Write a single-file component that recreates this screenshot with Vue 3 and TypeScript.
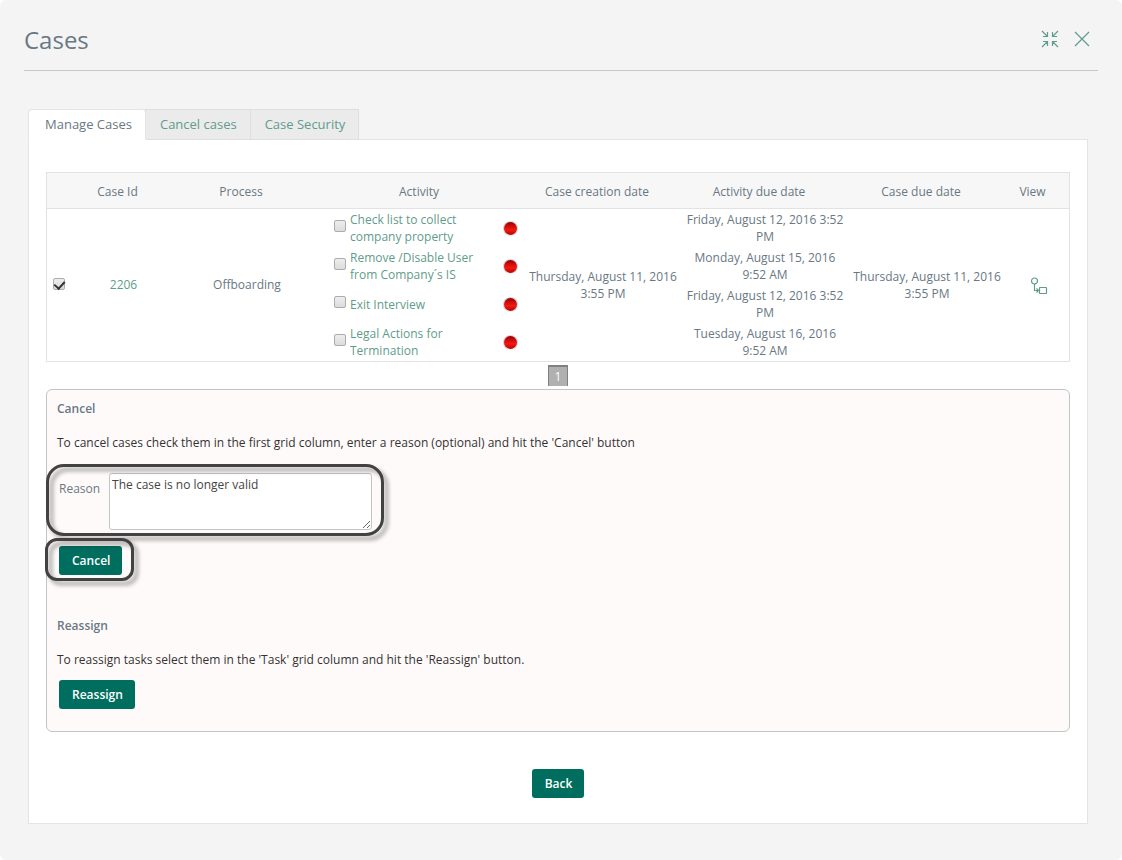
<script setup lang="ts">
import { ref } from 'vue'

interface Activity {
  name: string
  due: string
  selected: boolean
}

const tabs = ['Manage Cases', 'Cancel cases', 'Case Security']
const activeTab = ref(0)
const caseSelected = ref(true)
const reason = ref('The case is no longer valid')
const created = 'Thursday, August 11, 2016 3:55 PM'

const activities = ref<Activity[]>([
  { name: 'Check list to collect company property', due: 'Friday, August 12, 2016 3:52 PM', selected: false },
  { name: 'Remove /Disable User from Company´s IS', due: 'Monday, August 15, 2016 9:52 AM', selected: false },
  { name: 'Exit Interview', due: 'Friday, August 12, 2016 3:52 PM', selected: false },
  { name: 'Legal Actions for Termination', due: 'Tuesday, August 16, 2016 9:52 AM', selected: false },
])
</script>

<template>
  <div class="window">
    <header class="titlebar">
      <h1>Cases</h1>
      <div class="window-actions">
        <button type="button" class="icon-button" aria-label="Restore">
          <svg width="18" height="18" viewBox="0 0 18 18" fill="none" stroke="currentColor" stroke-width="1.2">
            <path d="M1 1l5.500 5.500M6.500 2v4.500H2M17 1l-5.500 5.500M11.500 2v4.500H16M1 17l5.500-5.500M6.500 16v-4.500H2M17 17l-5.500-5.500M11.500 16v-4.500H16" />
          </svg>
        </button>
        <button type="button" class="icon-button" aria-label="Close">
          <svg width="16" height="16" viewBox="0 0 16 16" fill="none" stroke="currentColor" stroke-width="1.2">
            <path d="M1 1l14 14M15 1L1 15" />
          </svg>
        </button>
      </div>
    </header>

    <main class="content">
      <div class="tabs" role="tablist">
        <button
          v-for="(tab, i) in tabs"
          :key="tab"
          type="button"
          role="tab"
          class="tab"
          :class="{ active: i === activeTab }"
          :aria-selected="i === activeTab"
          @click="activeTab = i"
        >{{ tab }}</button>
      </div>

      <section class="panel">
        <table class="cases">
          <colgroup>
            <col class="c-check" /><col class="c-id" /><col class="c-wide" /><col class="c-activity" />
            <col class="c-wide" /><col class="c-wide" /><col class="c-wide" /><col class="c-view" />
          </colgroup>
          <thead>
            <tr>
              <th></th>
              <th>Case Id</th>
              <th>Process</th>
              <th>Activity</th>
              <th>Case creation date</th>
              <th>Activity due date</th>
              <th>Case due date</th>
              <th>View</th>
            </tr>
          </thead>
          <tbody>
            <tr v-for="(activity, i) in activities" :key="activity.name">
              <template v-if="i === 0">
                <td class="check-cell" :rowspan="activities.length">
                  <input v-model="caseSelected" type="checkbox" class="check" aria-label="Select case 2206" />
                </td>
                <td class="case-cell" :rowspan="activities.length"><a href="#">2206</a></td>
                <td class="case-cell" :rowspan="activities.length">Offboarding</td>
              </template>
              <td class="activity-cell">
                <div class="activity">
                  <input v-model="activity.selected" type="checkbox" class="check" :aria-label="activity.name" />
                  <a href="#">{{ activity.name }}</a>
                  <span class="status" role="img" aria-label="Overdue"></span>
                </div>
              </td>
              <td v-if="i === 0" :rowspan="activities.length">{{ created }}</td>
              <td>{{ activity.due }}</td>
              <template v-if="i === 0">
                <td :rowspan="activities.length">{{ created }}</td>
                <td :rowspan="activities.length">
                  <button type="button" class="icon-button view" aria-label="View process">
                    <svg width="18" height="18" viewBox="0 0 18 18" fill="none" stroke="currentColor" stroke-width="1.2">
                      <circle cx="4.500" cy="4" r="3" />
                      <path d="M4.500 7v6.500H8M6.500 11.500l2 2-2 2" />
                      <rect x="9.500" y="10.500" width="7" height="6" rx="0.500" />
                    </svg>
                  </button>
                </td>
              </template>
            </tr>
          </tbody>
        </table>

        <nav class="pager" aria-label="Pages">
          <button type="button" class="page" aria-current="page">1</button>
        </nav>

        <div class="actions">
          <h2>Cancel</h2>
          <p>To cancel cases check them in the first grid column, enter a reason (optional) and hit the 'Cancel' button</p>
          <div class="reason marked">
            <label for="reason">Reason</label>
            <textarea id="reason" v-model="reason"></textarea>
          </div>
          <div class="cancel-row marked">
            <button type="button" class="primary">Cancel</button>
          </div>
          <h2 class="second">Reassign</h2>
          <p class="tight">To reassign tasks select them in the 'Task' grid column and hit the 'Reassign' button.</p>
          <button type="button" class="primary reassign">Reassign</button>
        </div>

        <div class="footer">
          <button type="button" class="primary">Back</button>
        </div>
      </section>
    </main>
  </div>
</template>

<style>
body {
  background: #fff;
}
</style>

<style scoped>
.window,
.window * {
  box-sizing: border-box;
}

.window {
  min-height: 100vh;
  padding: 0 24px 36px;
  background: #f4f4f4;
  border-radius: 6px;
  color: #697883;
  font-family: 'Open Sans', 'Noto Sans', sans-serif;
  font-size: 12px;
  line-height: 17px;
}

button,
textarea {
  font: inherit;
}

a {
  color: #5f9c8b;
  text-decoration: none;
}

.titlebar {
  display: flex;
  align-items: center;
  justify-content: space-between;
  height: 71px;
  padding: 8px 8px 0 0;
  border-bottom: 1px solid #c8c8c8;
}

h1 {
  margin: 0;
  padding-top: 2px;
  font-size: 24px;
  font-weight: 400;
  line-height: 32px;
}

.window-actions {
  display: flex;
  align-items: center;
  gap: 15px;
}

.icon-button {
  display: block;
  padding: 0;
  border: 0;
  background: none;
  color: #5f9c8f;
}

.icon-button svg {
  display: block;
}

.content {
  padding: 38px 10px 0 4px;
}

.tabs {
  display: flex;
}

.tab {
  position: relative;
  height: 31px;
  margin-bottom: -1px;
  padding: 0 13px;
  border: 1px solid #dedede;
  background: #ebebeb;
  color: #5f9c8b;
  font-size: 13px;
}

.tab + .tab {
  margin-left: -1px;
  padding-left: 14px;
}

.tab.active {
  z-index: 1;
  padding: 0 13px 0 16px;
  border-color: #e4e4e4;
  border-bottom-color: #fff;
  border-radius: 4px 4px 0 0;
  background: #fff;
  color: #697883;
}

.panel {
  padding: 32px 17px 25px;
  border: 1px solid #e4e4e4;
  background: #fff;
}

.cases {
  width: 100%;
  border: 1px solid #e2e2e2;
  border-spacing: 0;
  table-layout: fixed;
  text-align: center;
}

.c-check { width: 34px; }
.c-id { width: 85px; }
.c-wide { width: 162px; }
.c-activity { width: 194px; }
.c-view { width: 61px; }

th {
  height: 36px;
  padding: 2px 12px 0 0;
  border-bottom: 1px solid #e2e2e2;
  background: #f7f7f7;
  font-weight: 400;
}

td {
  height: 38px;
  padding: 2px;
  vertical-align: middle;
}

.case-cell {
  padding-bottom: 4px;
}

.check-cell {
  padding: 2px 2px 4px 6px;
  text-align: left;
}

.check {
  display: grid;
  flex: none;
  place-items: center;
  width: 12px;
  height: 12px;
  margin: 0;
  appearance: none;
  border: 1px solid #acacac;
  border-radius: 2px;
  background: linear-gradient(#ededed, #dcdcdc);
}

.check:checked::after {
  width: 5px;
  height: 8px;
  margin-bottom: 2px;
  border: solid #333;
  border-width: 0 2px 2px 0;
  content: '';
  transform: rotate(42deg);
}

.activity-cell {
  padding: 2px 4px 2px 6px;
}

.activity {
  display: flex;
  align-items: center;
  gap: 4px;
  text-align: left;
}

.activity .check {
  margin-bottom: 4px;
}

.activity a {
  flex: 1;
}

.status {
  width: 15px;
  height: 15px;
  border: 1px solid #d4d4d4;
  border-bottom-color: #eee;
  border-radius: 50%;
  background: linear-gradient(#8e0505, #d80c08 35%, #f01a12 60%, #b80404);
}

.view {
  margin: 2px auto 0;
}

.pager {
  display: flex;
  justify-content: center;
  padding: 3px 0;
}

.page {
  width: 20px;
  height: 21px;
  padding: 0;
  border: solid #808080;
  border-width: 2px 1px 0;
  background: #b0b0b0;
  color: #fff;
}

.actions {
  padding: 10px;
  border: 1px solid #c3c4c7;
  border-radius: 6px;
  background: #fffafa;
}

h2 {
  margin: 0 0 17px;
  font-size: 12px;
  font-weight: 600;
}

p {
  margin: 0 0 22px;
  color: #333;
}

.marked {
  position: relative;
  width: fit-content;
  margin-left: 2px;
}

.marked::after {
  position: absolute;
  inset: -9px -12px -6px -13px;
  border: 3px solid #424242;
  border-radius: 18px;
  content: '';
  filter: drop-shadow(4px 4px 2px rgba(0, 0, 0, 0.4));
  pointer-events: none;
}

.cancel-row.marked::after {
  inset: -8px -12px -6px -14px;
  border-radius: 12px;
}

.reason {
  display: flex;
  gap: 9px;
  margin-bottom: 16px;
}

.reason label {
  padding-top: 7px;
}

textarea {
  display: block;
  width: 263px;
  height: 57px;
  padding: 2px;
  border: 1px solid #c3c4c7;
  border-radius: 3px;
  background: #fff;
  color: #444;
  resize: both;
}

.primary {
  display: block;
  height: 29px;
  padding: 0 12px 0 13px;
  border: 0;
  border-radius: 3px;
  background: #006e5f;
  color: #fff;
  font-weight: 600;
}

.second {
  margin-top: 42px;
}

.tight {
  margin-bottom: 12px;
}

.reassign {
  margin: 0 0 12px 2px;
}

.footer {
  display: flex;
  justify-content: center;
  padding-top: 37px;
}
</style>
